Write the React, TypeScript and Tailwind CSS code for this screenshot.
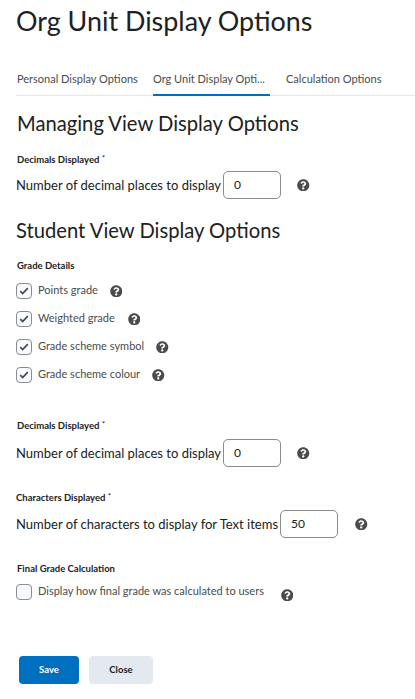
import { FaQuestionCircle } from "react-icons/fa";

// Grade settings page: org unit display options tab.

function Help({ className }: { className: string }) {
  return <FaQuestionCircle className={`shrink-0 text-[12.5px] text-[#494c4e] ${className}`} />;
}

function Label({ children, className = "" }: { children: React.ReactNode; className?: string }) {
  return (
    <div className={`h-[12px] text-[9.5px] leading-[12px] font-bold text-[#202122] ${className}`}>
      {children}
    </div>
  );
}

function Required({ children, className = "" }: { children: React.ReactNode; className?: string }) {
  return (
    <Label className={className}>
      {children} <span className="relative -top-[2px] text-[8px] font-normal">*</span>
    </Label>
  );
}

function NumberRow({
  text,
  value,
  helpMargin,
  className = "",
}: {
  text: string;
  value: string;
  helpMargin: string;
  className?: string;
}) {
  return (
    <div className={`flex items-center ${className}`}>
      <span className="text-[13px] leading-[20px] text-[#202122]">{text}</span>
      <div className="ml-[2px] flex h-[28px] w-[58px] shrink-0 items-center rounded-[5px] border border-[#868c8f] bg-white pl-[10px] text-[12px] text-[#202122]">
        {value}
      </div>
      <Help className={helpMargin} />
    </div>
  );
}

function CheckRow({
  text,
  checked = true,
  helpMargin,
  className = "",
}: {
  text: string;
  checked?: boolean;
  helpMargin: string;
  className?: string;
}) {
  return (
    <div className={`flex h-[16px] items-center ${className}`}>
      <div className="flex h-[16px] w-[16px] shrink-0 items-center justify-center rounded-[4px] border border-[#868c8f] bg-[#f9fbff]">
        {checked && (
          <svg width="10" height="8" viewBox="0 0 10 8" fill="none">
            <path d="M1.2 4.2 3.7 6.5 8.8 1.2" stroke="#494c4e" strokeWidth="1.8" />
          </svg>
        )}
      </div>
      <span className="ml-[6px] -translate-y-[1px] text-[11px] leading-[16px] text-[#494c4e]">
        {text}
      </span>
      <Help className={helpMargin} />
    </div>
  );
}

export default function App() {
  return (
    <div className="h-[699px] w-[415px] overflow-hidden bg-white font-['Lato',sans-serif] text-[#202122]">
      <h1 className="ml-[16px] pt-[3px] text-[26.9px] leading-[36px] font-normal">
        Org Unit Display Options
      </h1>

      <div className="mt-[26px] ml-[16px] flex h-[31px] border-b border-[#e3e9f1] text-[11px] leading-[16px] text-[#494c4e]">
        <div className="ml-[1px] w-[136px] pt-[6px]">Personal Display Options</div>
        <div className="relative h-[31px] w-[117px] pt-[6px]">
          Org Unit Display Opti...
          <div className="absolute right-0 bottom-0 left-0 h-[2px] bg-[#006fbf]" />
        </div>
        <div className="ml-[16px] pt-[6px]">Calculation Options</div>
      </div>

      <div className="px-[16px]">
        <h2 className="mt-[14px] ml-[1px] text-[20.2px] leading-[26px] font-normal">
          Managing View Display Options
        </h2>
        <Required className="mt-[18px] ml-[1px]">Decimals Displayed</Required>
        <NumberRow
          text="Number of decimal places to display"
          value="0"
          helpMargin="ml-[16px]"
          className="mt-[5px]"
        />

        <h2 className="mt-[18px] text-[20.2px] leading-[26px] font-normal">
          Student View Display Options
        </h2>
        <Label className="mt-[17px] ml-[1px]">Grade Details</Label>
        <CheckRow text="Points grade" helpMargin="ml-[12px]" className="mt-[11px]" />
        <CheckRow text="Weighted grade" helpMargin="ml-[13px]" className="mt-[12px]" />
        <CheckRow text="Grade scheme symbol" helpMargin="ml-[12px]" className="mt-[12px]" />
        <CheckRow text="Grade scheme colour" helpMargin="ml-[12px]" className="mt-[12px]" />

        <Required className="mt-[37px] ml-[1px]">Decimals Displayed</Required>
        <NumberRow
          text="Number of decimal places to display"
          value="0"
          helpMargin="ml-[16px]"
          className="mt-[7px]"
        />

        <Required className="mt-[25px]">Characters Displayed</Required>
        <NumberRow
          text="Number of characters to display for Text items"
          value="50"
          helpMargin="ml-[17px]"
          className="mt-[6px]"
        />

        <Label className="mt-[25px] ml-[1px]">Final Grade Calculation</Label>
        <CheckRow
          text="Display how final grade was calculated to users"
          checked={false}
          helpMargin="ml-[17px] translate-y-[3px]"
          className="mt-[9px]"
        />

        <div className="mt-[56px] ml-[3px] flex gap-[10px] text-[9.5px] font-bold">
          <button className="h-[28px] w-[60px] rounded-[4px] bg-[#006fbf] text-white">Save</button>
          <button className="h-[28px] w-[64px] rounded-[4px] bg-[#e3e9f1] text-[#202122]">
            Close
          </button>
        </div>
      </div>
    </div>
  );
}
